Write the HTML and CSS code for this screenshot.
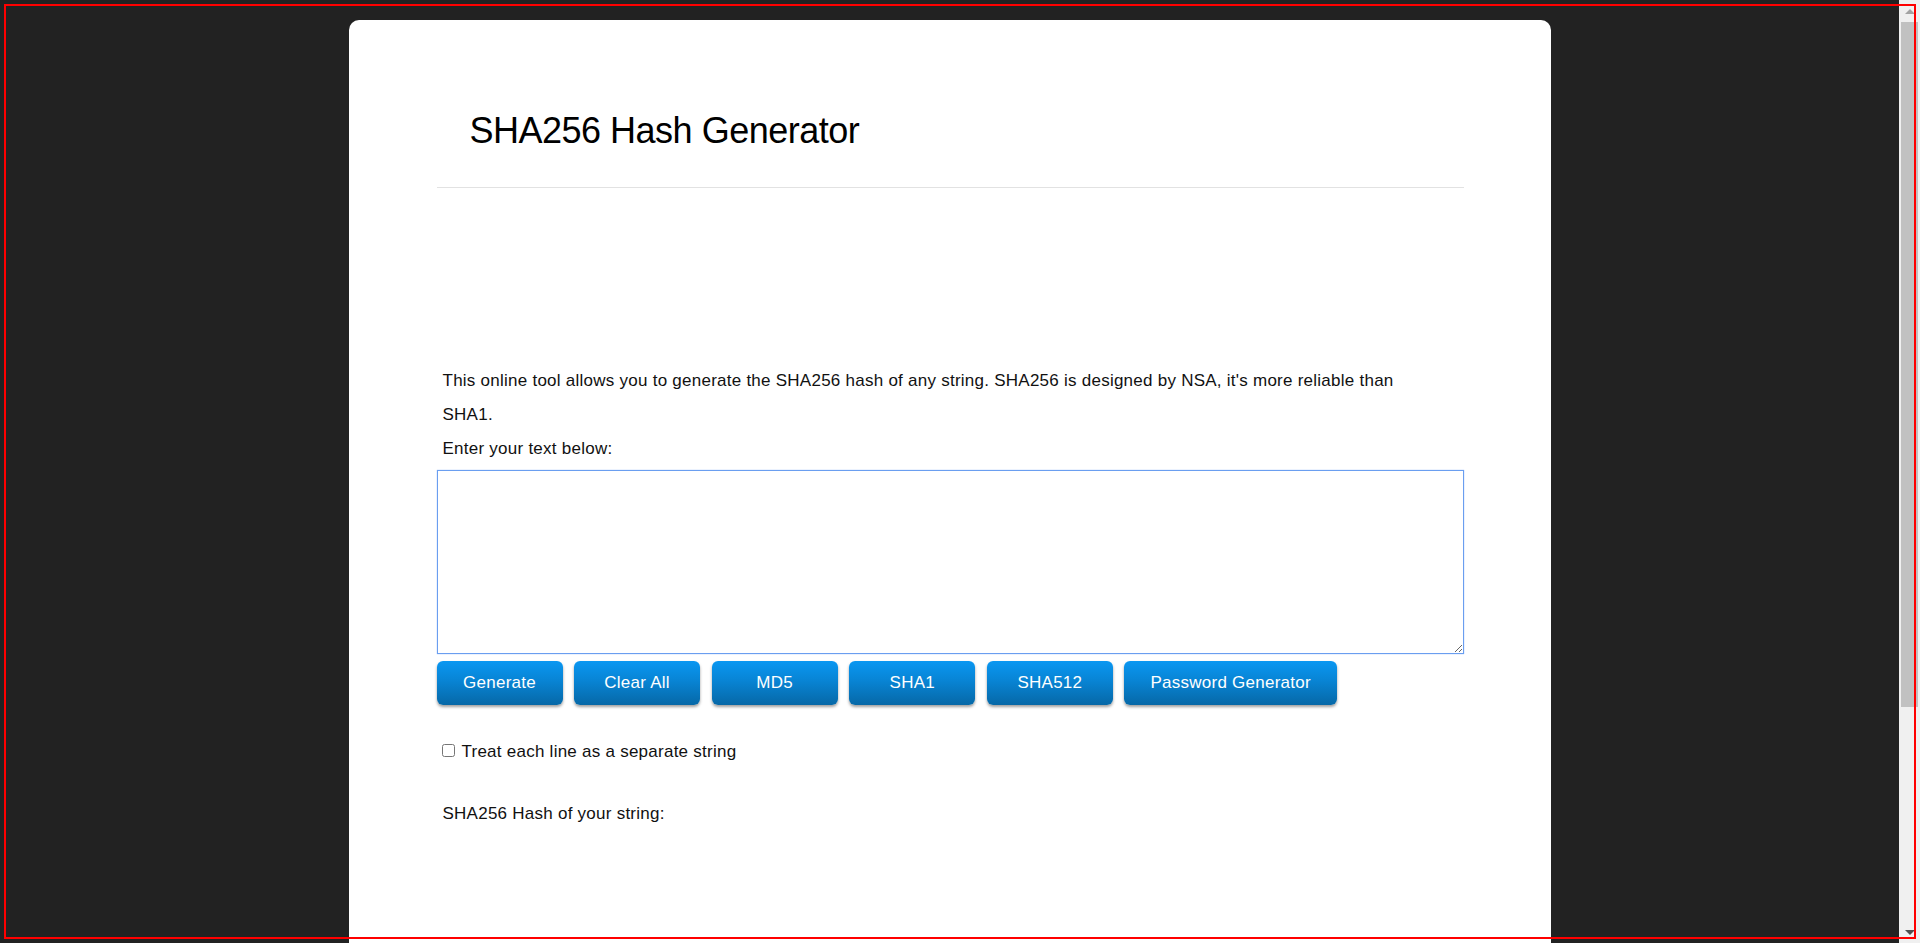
FILE: index.html
```html
<!DOCTYPE html>
<html lang="en">
<head>
<meta charset="utf-8">
<title>SHA256 Hash Generator</title>
<link rel="stylesheet" href="styles.css">
</head>
<body>
<div class="screen">
  <div class="viewport">
    <main class="card">
      <header class="head">
        <h1 class="title">SHA256 Hash Generator</h1>
      </header>
      <hr class="rule">
      <div class="ad-space"></div>
      <section class="tool">
        <p class="intro">This online tool allows you to generate the SHA256 hash of any string. SHA256 is designed by NSA, it's more reliable than SHA1.</p>
        <p class="prompt">Enter your text below:</p>
        <textarea class="input" aria-label="Text to hash"></textarea>
        <div class="actions">
          <button class="btn" type="button">Generate</button>
          <button class="btn" type="button">Clear All</button>
          <button class="btn" type="button">MD5</button>
          <button class="btn" type="button">SHA1</button>
          <button class="btn" type="button">SHA512</button>
          <button class="btn" type="button">Password Generator</button>
        </div>
        <label class="option"><input class="check" type="checkbox"><span>Treat each line as a separate string</span></label>
        <p class="result-label">SHA256 Hash of your string:</p>
      </section>
    </main>
  </div>
  <div class="scrollbar">
    <div class="sb-up"></div>
    <div class="sb-thumb"></div>
    <div class="sb-track"></div>
    <div class="sb-down"></div>
  </div>
</div>
<div class="frame"></div>
</body>
</html>
```
FILE: styles.css
```css
html, body {
  margin: 0;
  height: 100%;
  overflow: hidden;
  background: #222222;
  font-family: "Liberation Sans", Arial, sans-serif;
}

.screen {
  display: flex;
  height: 943px;
}

.viewport {
  flex: 1;
  overflow: hidden;
  display: flex;
  justify-content: center;
  padding-top: 20px;
}

.card {
  flex-shrink: 0;
  width: 1202px;
  min-height: 1100px;
  box-sizing: border-box;
  padding: 0 87px 0 88px;
  background: #ffffff;
  border-radius: 10px 10px 0 0;
}

.head {
  padding: 90px 0 0 33px;
}

.title {
  margin: 0;
  font-size: 36px;
  line-height: 41px;
  font-weight: normal;
  letter-spacing: -0.5px;
  color: #000;
}

.rule {
  margin: 36px 0 0;
  border: 0;
  border-top: 1px solid #e2e2e2;
  height: 0;
}

.ad-space {
  height: 176px;
}

.tool {
  color: #111;
  font-size: 17px;
  letter-spacing: 0.25px;
}

.intro, .prompt {
  margin: 0;
  padding: 0 56px 0 6px;
  line-height: 34px;
}

.input {
  display: block;
  box-sizing: border-box;
  width: 100%;
  height: 184px;
  margin: 4px 0 0;
  border: 1px solid #6a9ef0;
  box-shadow: 0 0 1px #8ab4f5;
  outline: none;
  background: #fff;
  font: 16px "Liberation Sans", Arial, sans-serif;
}

.actions {
  display: flex;
  gap: 11.6px;
  margin-top: 7px;
}

.btn {
  min-width: 126px;
  height: 44px;
  padding: 0 26px;
  border: 0;
  border-radius: 6px;
  background: linear-gradient(to bottom, #0a97f2 0%, #0884d4 45%, #0668a7 100%);
  box-shadow: 0 2px 3px rgba(0, 0, 0, 0.38);
  color: #fff;
  font: 17px "Liberation Sans", Arial, sans-serif;
  letter-spacing: 0.25px;
}

.option {
  display: flex;
  align-items: center;
  margin-top: 37px;
  line-height: 20px;
  color: #111;
}

.check {
  width: 13px;
  height: 13px;
  margin: -3px 7px 0 5px;
}

.result-label {
  margin: 42px 0 0;
  padding-left: 6px;
  line-height: 20px;
}

.scrollbar {
  width: 21px;
  box-sizing: border-box;
  padding: 0 2px;
  background: #f0f0f0;
  display: flex;
  flex-direction: column;
}

.sb-up, .sb-down {
  height: 22px;
  display: flex;
  align-items: center;
  justify-content: center;
}

.sb-up::before {
  content: "";
  border-left: 5px solid transparent;
  border-right: 5px solid transparent;
  border-bottom: 5px solid #a3a3a3;
}

.sb-down::before {
  content: "";
  border-left: 5px solid transparent;
  border-right: 5px solid transparent;
  border-top: 5px solid #505050;
}

.sb-thumb {
  height: 685px;
  background: #c1c1c1;
}

.sb-track {
  flex: 1;
}

.frame {
  position: fixed;
  left: 4px;
  top: 4px;
  width: 1912px;
  height: 935px;
  box-sizing: border-box;
  border: 2px solid #ff0000;
  pointer-events: none;
}
```
